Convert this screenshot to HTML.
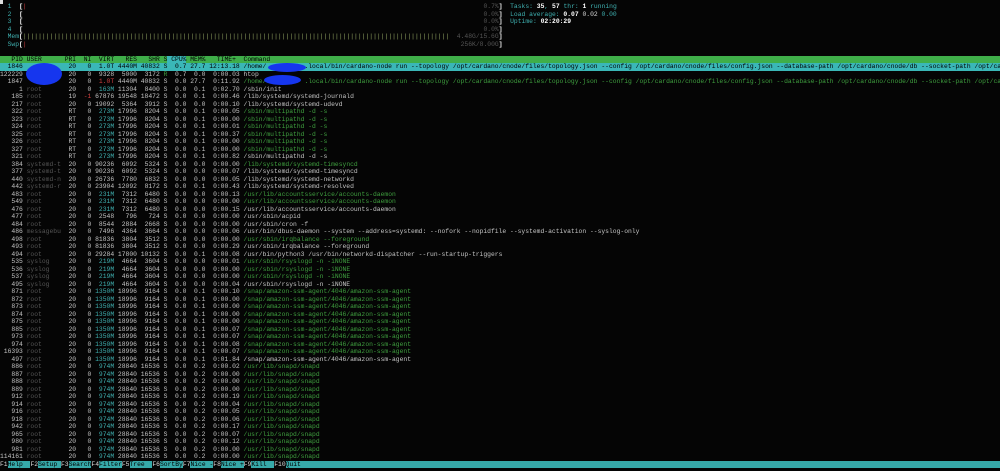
<!DOCTYPE html>
<html><head><meta charset="utf-8">
<style>
html,body{margin:0;padding:0;background:#050505;width:1000px;height:471px;overflow:hidden}
#t{position:absolute;left:0;top:3.25px;font-family:"Liberation Mono",monospace;font-size:6.35px;color:#c4c4c4}
.l{height:7.5px;line-height:7.5px;width:1000px;white-space:pre;overflow:hidden}
.l span{display:inline-block;vertical-align:top}
.a{width:6ch;text-align:right}
.b{width:10ch;padding-left:1ch;text-align:left}
.c{width:3ch;text-align:right}
.d{width:4ch;text-align:right}
.e{width:6ch;text-align:right}
.f{width:2ch;text-align:right}
.g{width:5ch;text-align:right}
.h{width:9ch;text-align:right}
.n{color:#555}
.y{color:#3fb0b0}
.gr{color:#3f9f3f}
.rd{color:#d04040}
.w{color:#fff;font-weight:bold}
.cy{color:#3fb0b0}
.hd{background:#3fae49;color:#000}
.sel{background:#3ab7b7;color:#000}
.sel .n{color:#000}
.l span.m{display:inline-block;width:132ch;position:relative}
.l span.pr{position:absolute;right:0;top:0}
.ft{background:#36a9a9;color:#000}
.k{background:#050505;color:#ddd}
.blob{position:absolute;background:#1636ee;border-radius:50%}
</style></head><body>
<div style="position:absolute;left:0;top:0;width:3px;height:4px;background:#ddd"></div>
<div id="t">
<div class=l><span class=m>  <span class=cy>1</span>  <span class=w>[</span><span class=rd>|</span><span class=pr><span class=n>0.7%</span><span class=w>]</span></span></span>  <span class=cy>Tasks: </span><span class=w>35</span><span class=cy>, </span><span class=w>57</span><span class=cy> thr: </span><span class=w>1</span><span class=cy> running</span></div>
<div class=l><span class=m>  <span class=cy>2</span>  <span class=w>[</span><span class=pr><span class=n>0.0%</span><span class=w>]</span></span></span>  <span class=cy>Load average: </span><span class=w>0.07</span> <span style="color:#ddd">0.02</span> <span class=cy>0.00</span></div>
<div class=l><span class=m>  <span class=cy>3</span>  <span class=w>[</span><span class=pr><span class=n>0.0%</span><span class=w>]</span></span></span>  <span class=cy>Uptime: </span><span class=w>02:20:29</span></div>
<div class=l><span class=m>  <span class=cy>4</span>  <span class=w>[</span><span class=pr><span class=n>0.0%</span><span class=w>]</span></span></span></div>
<div class=l><span class=m>  <span class=cy>Mem</span><span class=w>[</span><span style="color:#8fa060">||||||||||||||||||||||||||||||||||||||||||||||||||||||||||||||||||||||||||||||||||||||||||||||||||||||||||||||||</span><span class=pr><span class=n>4.48G/15.6G</span><span class=w>]</span></span></span></div>
<div class=l><span class=m>  <span class=cy>Swp</span><span class=w>[</span><span class=rd>|</span><span class=pr><span class=n>256K/8.00G</span><span class=w>]</span></span></span></div>
<div class=l> </div>
<div class="l hd"><span class=a>PID</span><span class=b>USER</span><span class=c>PRI</span><span class=d>NI</span><span class=e>VIRT</span><span class=e>RES</span><span class=e>SHR</span><span class=f>S</span><span class=g style="background:#3ab7b7">CPU%</span><span class=g>MEM%</span><span class=h>TIME+ </span> Command</div>
<div class="l sel"><span class=a>1846</span><span class=b> </span><span class=c>20</span><span class=d>0</span><span class=e>1.0T</span><span class=e>4440M</span><span class=e>40832</span><span class=f>S</span><span class=g>0.7</span><span class=g>27.7</span><span class=h>12:13.18</span> /home/          .local/bin/cardano-node run --topology /opt/cardano/cnode/files/topology.json --config /opt/cardano/cnode/files/config.json --database-path /opt/cardano/cnode/db --socket-path /opt/cardano/cnode/sockets/node0.socket</div>
<div class=l><span class=a>122229</span><span class=b> </span><span class=c>20</span><span class=d>0</span><span class=e>9328</span><span class=e>5000</span><span class=e>3172</span><span class=f style="color:#3f9f3f">R</span><span class=g>0.7</span><span class=g>0.0</span><span class=h>0:00.03</span> htop</div>
<div class=l><span class=a>1847</span><span class=b> </span><span class=c>20</span><span class=d>0</span><span class="e rd">1.0T</span><span class=e>4440M</span><span class=e>40832</span><span class=f>S</span><span class=g>0.0</span><span class=g>27.7</span><span class=h>0:11.92</span> <span class=gr>/home/          .local/bin/cardano-node run --topology /opt/cardano/cnode/files/topology.json --config /opt/cardano/cnode/files/config.json --database-path /opt/cardano/cnode/db --socket-path /opt/cardano/cnode/sockets/node0.socket</span></div>
<div class=l><span class=a>1</span><span class="b n">root</span><span class=c>20</span><span class=d>0</span><span class="e y">163M</span><span class=e>11304</span><span class=e>8400</span><span class=f>S</span><span class=g>0.0</span><span class=g>0.1</span><span class=h>0:02.70</span> /sbin/init</div>
<div class=l><span class=a>185</span><span class="b n">root</span><span class=c>19</span><span class="d rd">-1</span><span class=e>67876</span><span class=e>19548</span><span class=e>18472</span><span class=f>S</span><span class=g>0.0</span><span class=g>0.1</span><span class=h>0:00.46</span> /lib/systemd/systemd-journald</div>
<div class=l><span class=a>217</span><span class="b n">root</span><span class=c>20</span><span class=d>0</span><span class=e>19092</span><span class=e>5364</span><span class=e>3912</span><span class=f>S</span><span class=g>0.0</span><span class=g>0.0</span><span class=h>0:00.10</span> /lib/systemd/systemd-udevd</div>
<div class=l><span class=a>322</span><span class="b n">root</span><span class=c>RT</span><span class=d>0</span><span class="e y">273M</span><span class=e>17996</span><span class=e>8204</span><span class=f>S</span><span class=g>0.0</span><span class=g>0.1</span><span class=h>0:00.05</span> <span class=gr>/sbin/multipathd -d -s</span></div>
<div class=l><span class=a>323</span><span class="b n">root</span><span class=c>RT</span><span class=d>0</span><span class="e y">273M</span><span class=e>17996</span><span class=e>8204</span><span class=f>S</span><span class=g>0.0</span><span class=g>0.1</span><span class=h>0:00.00</span> <span class=gr>/sbin/multipathd -d -s</span></div>
<div class=l><span class=a>324</span><span class="b n">root</span><span class=c>RT</span><span class=d>0</span><span class="e y">273M</span><span class=e>17996</span><span class=e>8204</span><span class=f>S</span><span class=g>0.0</span><span class=g>0.1</span><span class=h>0:00.01</span> <span class=gr>/sbin/multipathd -d -s</span></div>
<div class=l><span class=a>325</span><span class="b n">root</span><span class=c>RT</span><span class=d>0</span><span class="e y">273M</span><span class=e>17996</span><span class=e>8204</span><span class=f>S</span><span class=g>0.0</span><span class=g>0.1</span><span class=h>0:00.37</span> <span class=gr>/sbin/multipathd -d -s</span></div>
<div class=l><span class=a>326</span><span class="b n">root</span><span class=c>RT</span><span class=d>0</span><span class="e y">273M</span><span class=e>17996</span><span class=e>8204</span><span class=f>S</span><span class=g>0.0</span><span class=g>0.1</span><span class=h>0:00.00</span> <span class=gr>/sbin/multipathd -d -s</span></div>
<div class=l><span class=a>327</span><span class="b n">root</span><span class=c>RT</span><span class=d>0</span><span class="e y">273M</span><span class=e>17996</span><span class=e>8204</span><span class=f>S</span><span class=g>0.0</span><span class=g>0.1</span><span class=h>0:00.00</span> <span class=gr>/sbin/multipathd -d -s</span></div>
<div class=l><span class=a>321</span><span class="b n">root</span><span class=c>RT</span><span class=d>0</span><span class="e y">273M</span><span class=e>17996</span><span class=e>8204</span><span class=f>S</span><span class=g>0.0</span><span class=g>0.1</span><span class=h>0:00.82</span> /sbin/multipathd -d -s</div>
<div class=l><span class=a>384</span><span class="b n">systemd-t</span><span class=c>20</span><span class=d>0</span><span class=e>90236</span><span class=e>6092</span><span class=e>5324</span><span class=f>S</span><span class=g>0.0</span><span class=g>0.0</span><span class=h>0:00.00</span> <span class=gr>/lib/systemd/systemd-timesyncd</span></div>
<div class=l><span class=a>377</span><span class="b n">systemd-t</span><span class=c>20</span><span class=d>0</span><span class=e>90236</span><span class=e>6092</span><span class=e>5324</span><span class=f>S</span><span class=g>0.0</span><span class=g>0.0</span><span class=h>0:00.07</span> /lib/systemd/systemd-timesyncd</div>
<div class=l><span class=a>440</span><span class="b n">systemd-n</span><span class=c>20</span><span class=d>0</span><span class=e>26736</span><span class=e>7780</span><span class=e>6832</span><span class=f>S</span><span class=g>0.0</span><span class=g>0.0</span><span class=h>0:00.05</span> /lib/systemd/systemd-networkd</div>
<div class=l><span class=a>442</span><span class="b n">systemd-r</span><span class=c>20</span><span class=d>0</span><span class=e>23904</span><span class=e>12092</span><span class=e>8172</span><span class=f>S</span><span class=g>0.0</span><span class=g>0.1</span><span class=h>0:00.43</span> /lib/systemd/systemd-resolved</div>
<div class=l><span class=a>483</span><span class="b n">root</span><span class=c>20</span><span class=d>0</span><span class="e y">231M</span><span class=e>7312</span><span class=e>6480</span><span class=f>S</span><span class=g>0.0</span><span class=g>0.0</span><span class=h>0:00.13</span> <span class=gr>/usr/lib/accountsservice/accounts-daemon</span></div>
<div class=l><span class=a>549</span><span class="b n">root</span><span class=c>20</span><span class=d>0</span><span class="e y">231M</span><span class=e>7312</span><span class=e>6480</span><span class=f>S</span><span class=g>0.0</span><span class=g>0.0</span><span class=h>0:00.00</span> <span class=gr>/usr/lib/accountsservice/accounts-daemon</span></div>
<div class=l><span class=a>476</span><span class="b n">root</span><span class=c>20</span><span class=d>0</span><span class="e y">231M</span><span class=e>7312</span><span class=e>6480</span><span class=f>S</span><span class=g>0.0</span><span class=g>0.0</span><span class=h>0:00.15</span> /usr/lib/accountsservice/accounts-daemon</div>
<div class=l><span class=a>477</span><span class="b n">root</span><span class=c>20</span><span class=d>0</span><span class=e>2548</span><span class=e>796</span><span class=e>724</span><span class=f>S</span><span class=g>0.0</span><span class=g>0.0</span><span class=h>0:00.00</span> /usr/sbin/acpid</div>
<div class=l><span class=a>484</span><span class="b n">root</span><span class=c>20</span><span class=d>0</span><span class=e>8544</span><span class=e>2884</span><span class=e>2668</span><span class=f>S</span><span class=g>0.0</span><span class=g>0.0</span><span class=h>0:00.00</span> /usr/sbin/cron -f</div>
<div class=l><span class=a>486</span><span class="b n">messagebu</span><span class=c>20</span><span class=d>0</span><span class=e>7496</span><span class=e>4364</span><span class=e>3664</span><span class=f>S</span><span class=g>0.0</span><span class=g>0.0</span><span class=h>0:00.06</span> /usr/bin/dbus-daemon --system --address=systemd: --nofork --nopidfile --systemd-activation --syslog-only</div>
<div class=l><span class=a>498</span><span class="b n">root</span><span class=c>20</span><span class=d>0</span><span class=e>81836</span><span class=e>3804</span><span class=e>3512</span><span class=f>S</span><span class=g>0.0</span><span class=g>0.0</span><span class=h>0:00.00</span> <span class=gr>/usr/sbin/irqbalance --foreground</span></div>
<div class=l><span class=a>493</span><span class="b n">root</span><span class=c>20</span><span class=d>0</span><span class=e>81836</span><span class=e>3804</span><span class=e>3512</span><span class=f>S</span><span class=g>0.0</span><span class=g>0.0</span><span class=h>0:00.29</span> /usr/sbin/irqbalance --foreground</div>
<div class=l><span class=a>494</span><span class="b n">root</span><span class=c>20</span><span class=d>0</span><span class=e>29284</span><span class=e>17800</span><span class=e>10132</span><span class=f>S</span><span class=g>0.0</span><span class=g>0.1</span><span class=h>0:00.08</span> /usr/bin/python3 /usr/bin/networkd-dispatcher --run-startup-triggers</div>
<div class=l><span class=a>535</span><span class="b n">syslog</span><span class=c>20</span><span class=d>0</span><span class="e y">219M</span><span class=e>4664</span><span class=e>3604</span><span class=f>S</span><span class=g>0.0</span><span class=g>0.0</span><span class=h>0:00.01</span> <span class=gr>/usr/sbin/rsyslogd -n -iNONE</span></div>
<div class=l><span class=a>536</span><span class="b n">syslog</span><span class=c>20</span><span class=d>0</span><span class="e y">219M</span><span class=e>4664</span><span class=e>3604</span><span class=f>S</span><span class=g>0.0</span><span class=g>0.0</span><span class=h>0:00.00</span> <span class=gr>/usr/sbin/rsyslogd -n -iNONE</span></div>
<div class=l><span class=a>537</span><span class="b n">syslog</span><span class=c>20</span><span class=d>0</span><span class="e y">219M</span><span class=e>4664</span><span class=e>3604</span><span class=f>S</span><span class=g>0.0</span><span class=g>0.0</span><span class=h>0:00.00</span> <span class=gr>/usr/sbin/rsyslogd -n -iNONE</span></div>
<div class=l><span class=a>495</span><span class="b n">syslog</span><span class=c>20</span><span class=d>0</span><span class="e y">219M</span><span class=e>4664</span><span class=e>3604</span><span class=f>S</span><span class=g>0.0</span><span class=g>0.0</span><span class=h>0:00.04</span> /usr/sbin/rsyslogd -n -iNONE</div>
<div class=l><span class=a>871</span><span class="b n">root</span><span class=c>20</span><span class=d>0</span><span class="e y">1350M</span><span class=e>18996</span><span class=e>9164</span><span class=f>S</span><span class=g>0.0</span><span class=g>0.1</span><span class=h>0:00.10</span> <span class=gr>/snap/amazon-ssm-agent/4046/amazon-ssm-agent</span></div>
<div class=l><span class=a>872</span><span class="b n">root</span><span class=c>20</span><span class=d>0</span><span class="e y">1350M</span><span class=e>18996</span><span class=e>9164</span><span class=f>S</span><span class=g>0.0</span><span class=g>0.1</span><span class=h>0:00.00</span> <span class=gr>/snap/amazon-ssm-agent/4046/amazon-ssm-agent</span></div>
<div class=l><span class=a>873</span><span class="b n">root</span><span class=c>20</span><span class=d>0</span><span class="e y">1350M</span><span class=e>18996</span><span class=e>9164</span><span class=f>S</span><span class=g>0.0</span><span class=g>0.1</span><span class=h>0:00.00</span> <span class=gr>/snap/amazon-ssm-agent/4046/amazon-ssm-agent</span></div>
<div class=l><span class=a>874</span><span class="b n">root</span><span class=c>20</span><span class=d>0</span><span class="e y">1350M</span><span class=e>18996</span><span class=e>9164</span><span class=f>S</span><span class=g>0.0</span><span class=g>0.1</span><span class=h>0:00.00</span> <span class=gr>/snap/amazon-ssm-agent/4046/amazon-ssm-agent</span></div>
<div class=l><span class=a>875</span><span class="b n">root</span><span class=c>20</span><span class=d>0</span><span class="e y">1350M</span><span class=e>18996</span><span class=e>9164</span><span class=f>S</span><span class=g>0.0</span><span class=g>0.1</span><span class=h>0:00.00</span> <span class=gr>/snap/amazon-ssm-agent/4046/amazon-ssm-agent</span></div>
<div class=l><span class=a>885</span><span class="b n">root</span><span class=c>20</span><span class=d>0</span><span class="e y">1350M</span><span class=e>18996</span><span class=e>9164</span><span class=f>S</span><span class=g>0.0</span><span class=g>0.1</span><span class=h>0:00.07</span> <span class=gr>/snap/amazon-ssm-agent/4046/amazon-ssm-agent</span></div>
<div class=l><span class=a>973</span><span class="b n">root</span><span class=c>20</span><span class=d>0</span><span class="e y">1350M</span><span class=e>18996</span><span class=e>9164</span><span class=f>S</span><span class=g>0.0</span><span class=g>0.1</span><span class=h>0:00.07</span> <span class=gr>/snap/amazon-ssm-agent/4046/amazon-ssm-agent</span></div>
<div class=l><span class=a>974</span><span class="b n">root</span><span class=c>20</span><span class=d>0</span><span class="e y">1350M</span><span class=e>18996</span><span class=e>9164</span><span class=f>S</span><span class=g>0.0</span><span class=g>0.1</span><span class=h>0:00.08</span> <span class=gr>/snap/amazon-ssm-agent/4046/amazon-ssm-agent</span></div>
<div class=l><span class=a>16393</span><span class="b n">root</span><span class=c>20</span><span class=d>0</span><span class="e y">1350M</span><span class=e>18996</span><span class=e>9164</span><span class=f>S</span><span class=g>0.0</span><span class=g>0.1</span><span class=h>0:00.07</span> <span class=gr>/snap/amazon-ssm-agent/4046/amazon-ssm-agent</span></div>
<div class=l><span class=a>497</span><span class="b n">root</span><span class=c>20</span><span class=d>0</span><span class="e y">1350M</span><span class=e>18996</span><span class=e>9164</span><span class=f>S</span><span class=g>0.0</span><span class=g>0.1</span><span class=h>0:01.84</span> /snap/amazon-ssm-agent/4046/amazon-ssm-agent</div>
<div class=l><span class=a>886</span><span class="b n">root</span><span class=c>20</span><span class=d>0</span><span class="e y">974M</span><span class=e>28840</span><span class=e>16536</span><span class=f>S</span><span class=g>0.0</span><span class=g>0.2</span><span class=h>0:00.02</span> <span class=gr>/usr/lib/snapd/snapd</span></div>
<div class=l><span class=a>887</span><span class="b n">root</span><span class=c>20</span><span class=d>0</span><span class="e y">974M</span><span class=e>28840</span><span class=e>16536</span><span class=f>S</span><span class=g>0.0</span><span class=g>0.2</span><span class=h>0:00.00</span> <span class=gr>/usr/lib/snapd/snapd</span></div>
<div class=l><span class=a>888</span><span class="b n">root</span><span class=c>20</span><span class=d>0</span><span class="e y">974M</span><span class=e>28840</span><span class=e>16536</span><span class=f>S</span><span class=g>0.0</span><span class=g>0.2</span><span class=h>0:00.00</span> <span class=gr>/usr/lib/snapd/snapd</span></div>
<div class=l><span class=a>889</span><span class="b n">root</span><span class=c>20</span><span class=d>0</span><span class="e y">974M</span><span class=e>28840</span><span class=e>16536</span><span class=f>S</span><span class=g>0.0</span><span class=g>0.2</span><span class=h>0:00.00</span> <span class=gr>/usr/lib/snapd/snapd</span></div>
<div class=l><span class=a>912</span><span class="b n">root</span><span class=c>20</span><span class=d>0</span><span class="e y">974M</span><span class=e>28840</span><span class=e>16536</span><span class=f>S</span><span class=g>0.0</span><span class=g>0.2</span><span class=h>0:00.19</span> <span class=gr>/usr/lib/snapd/snapd</span></div>
<div class=l><span class=a>914</span><span class="b n">root</span><span class=c>20</span><span class=d>0</span><span class="e y">974M</span><span class=e>28840</span><span class=e>16536</span><span class=f>S</span><span class=g>0.0</span><span class=g>0.2</span><span class=h>0:00.04</span> <span class=gr>/usr/lib/snapd/snapd</span></div>
<div class=l><span class=a>916</span><span class="b n">root</span><span class=c>20</span><span class=d>0</span><span class="e y">974M</span><span class=e>28840</span><span class=e>16536</span><span class=f>S</span><span class=g>0.0</span><span class=g>0.2</span><span class=h>0:00.05</span> <span class=gr>/usr/lib/snapd/snapd</span></div>
<div class=l><span class=a>918</span><span class="b n">root</span><span class=c>20</span><span class=d>0</span><span class="e y">974M</span><span class=e>28840</span><span class=e>16536</span><span class=f>S</span><span class=g>0.0</span><span class=g>0.2</span><span class=h>0:00.06</span> <span class=gr>/usr/lib/snapd/snapd</span></div>
<div class=l><span class=a>942</span><span class="b n">root</span><span class=c>20</span><span class=d>0</span><span class="e y">974M</span><span class=e>28840</span><span class=e>16536</span><span class=f>S</span><span class=g>0.0</span><span class=g>0.2</span><span class=h>0:00.17</span> <span class=gr>/usr/lib/snapd/snapd</span></div>
<div class=l><span class=a>965</span><span class="b n">root</span><span class=c>20</span><span class=d>0</span><span class="e y">974M</span><span class=e>28840</span><span class=e>16536</span><span class=f>S</span><span class=g>0.0</span><span class=g>0.2</span><span class=h>0:00.07</span> <span class=gr>/usr/lib/snapd/snapd</span></div>
<div class=l><span class=a>980</span><span class="b n">root</span><span class=c>20</span><span class=d>0</span><span class="e y">974M</span><span class=e>28840</span><span class=e>16536</span><span class=f>S</span><span class=g>0.0</span><span class=g>0.2</span><span class=h>0:00.12</span> <span class=gr>/usr/lib/snapd/snapd</span></div>
<div class=l><span class=a>981</span><span class="b n">root</span><span class=c>20</span><span class=d>0</span><span class="e y">974M</span><span class=e>28840</span><span class=e>16536</span><span class=f>S</span><span class=g>0.0</span><span class=g>0.2</span><span class=h>0:00.00</span> <span class=gr>/usr/lib/snapd/snapd</span></div>
<div class=l><span class=a>114161</span><span class="b n">root</span><span class=c>20</span><span class=d>0</span><span class="e y">974M</span><span class=e>28840</span><span class=e>16536</span><span class=f>S</span><span class=g>0.0</span><span class=g>0.2</span><span class=h>0:00.00</span> <span class=gr>/usr/lib/snapd/snapd</span></div>
<div class="l ft"><span class=k>F1</span>Help  <span class=k>F2</span>Setup <span class=k>F3</span>Search<span class=k>F4</span>Filter<span class=k>F5</span>Tree  <span class=k>F6</span>SortBy<span class=k>F7</span>Nice -<span class=k>F8</span>Nice +<span class=k>F9</span>Kill  <span class=k>F10</span>Quit</div>
</div>
<div class=blob style="left:26px;top:63px;width:36px;height:22px"></div>
<div class=blob style="left:268px;top:63px;width:38px;height:9px"></div>
<div class=blob style="left:264px;top:75px;width:37px;height:10px"></div>
</body></html>
